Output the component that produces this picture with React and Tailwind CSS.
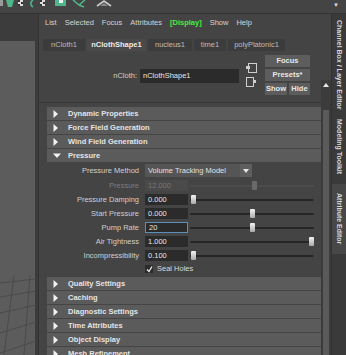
import React from 'react'

const FONT = { fontFamily: '"Liberation Sans", Arial, sans-serif' }

const Tri = ({ open }) =>
  open ? (
    <svg width="8" height="6" viewBox="0 0 8 6"><path d="M0 0.5h8L4 5z" fill="#f2f2f2" /></svg>
  ) : (
    <svg width="6" height="8" viewBox="0 0 6 8"><path d="M0.5 0v8L5 4z" fill="#f2f2f2" /></svg>
  )

const Header = ({ title, open }) => (
  <div className="flex h-[13px] shrink-0 items-center bg-[#5b5b5b] pl-[6px] text-[7.5px] font-bold text-[#e4e4e4]">
    <div className="flex w-[15px] items-center">
      <Tri open={open} />
    </div>
    <span>{title}</span>
  </div>
)

const Slider = ({ pos, disabled }) => (
  <div className="relative ml-[2px] h-full w-[124px]">
    <div className={`absolute left-0 right-0 top-[5px] h-[2px] rounded-full ${disabled ? 'bg-[#4c4c4c]' : 'bg-[#262626]'}`}></div>
    <div
      className={`absolute top-[1px] h-[9px] w-[5px] rounded-[1px] ${disabled ? 'bg-[#6a6a6a]' : 'bg-gradient-to-b from-[#f4f4f4] to-[#a9a9a9]'}`}
      style={{ left: pos }}
    ></div>
  </div>
)

const Row = ({ label, value, pos, disabled, active }) => (
  <div className="flex h-[11px] items-center">
    <div className={`w-[98px] pr-[6px] text-right ${disabled ? 'text-[#7c7c7c]' : 'text-[#cfcfcf]'}`}>{label}</div>
    <div
      className={`flex h-[11px] w-[43px] items-center pl-[3px] ${
        disabled
          ? 'bg-[#4a4a4a] text-[#777]'
          : active
            ? 'border border-[#5c8fb8] bg-[#2b2b2b] pl-[2px] text-[#e6e6e6]'
            : 'bg-[#2b2b2b] text-[#e6e6e6]'
      }`}
    >
      {value}
    </div>
    <Slider pos={pos} disabled={disabled} />
  </div>
)

const Btn = ({ children, className = '' }) => (
  <div className={`flex h-[12px] items-center justify-center bg-[#5d5d5d] text-[7.5px] font-bold text-[#e8e8e8] ${className}`}>
    {children}
  </div>
)

const Toolbar = () => (
  <div className="flex h-[14px] shrink-0 items-start border-b border-[#333] bg-[#444]">
    <svg width="120" height="8" viewBox="0 0 120 8">
      <rect x="0" y="0" width="3" height="6" fill="#9a9a9a" />
      <path d="M6 0h8l-2 7H8z" fill="#4fb58a" />
      <rect x="18" y="0" width="5" height="6" fill="#ddd" />
      <rect x="18" y="0" width="2" height="2" fill="#333" />
      <rect x="21" y="2" width="2" height="2" fill="#333" />
      <rect x="18" y="4" width="2" height="2" fill="#333" />
      <path d="M33 0c-3 2-3 5 0 7" stroke="#4fb58a" strokeWidth="1.6" fill="none" />
      <rect x="40" y="0" width="5" height="6" fill="#ddd" />
      <rect x="40" y="0" width="2" height="2" fill="#333" />
      <rect x="43" y="2" width="2" height="2" fill="#333" />
      <rect x="40" y="4" width="2" height="2" fill="#333" />
      <rect x="55" y="0" width="11" height="6" fill="#4fb58a" />
      <rect x="59" y="0" width="4" height="3" fill="#eee" />
      <path d="M73 0l6 5 6-5M79 5l5 2" stroke="#4fb58a" strokeWidth="1.6" fill="none" />
      <path d="M97 6l7-5 7 5" stroke="#ccc" strokeWidth="1.6" fill="none" />
      <path d="M100 6l4-3 4 3z" fill="#888" />
    </svg>
    <div className="ml-auto mr-[7px] mt-[2px] text-[6px] text-[#ddd]">▼</div>
  </div>
)

const Viewport = () => (
  <div className="flex w-[39px] shrink-0 flex-col border-r border-[#333] bg-[#3c3c3c]">
    <div className="h-[27px] shrink-0"></div>
    <div className="relative mr-[3px] flex-1 bg-[#5c5c5c]">
      <svg className="absolute bottom-0 left-0" width="36" height="80" viewBox="0 0 36 80">
        <g stroke="#4b4b4b" strokeWidth="1" fill="none">
          <path d="M0 8L36 4" />
          <path d="M0 22L36 16" />
          <path d="M0 38L36 30" />
          <path d="M0 58L36 47" />
          <path d="M0 78L36 66" />
          <path d="M14 0L4 80" />
          <path d="M30 0L24 80" />
        </g>
      </svg>
    </div>
  </div>
)

const VTab = ({ children, className = '' }) => (
  <div
    className={`flex shrink-0 items-center justify-center whitespace-nowrap text-[7px] font-bold text-[#d8d8d8] ${className}`}
    style={{ writingMode: 'vertical-rl' }}
  >
    {children}
  </div>
)

export default function App() {
  const menu = ['List', 'Selected', 'Focus', 'Attributes']
  const tabs = [
    { t: 'nCloth1', w: 'w-[42px]' },
    { t: 'nClothShape1', w: 'w-[59px]', a: true },
    { t: 'nucleus1', w: 'w-[44px]' },
    { t: 'time1', w: 'w-[32px]' },
    { t: 'polyPlatonic1', w: 'w-[57px]' },
  ]
  return (
    <div className="flex h-[355px] w-[346px] flex-col overflow-hidden bg-[#444] text-[7.5px] leading-none" style={FONT}>
      <Toolbar />
      <div className="flex min-h-0 flex-1">
        <Viewport />
        <div className="flex min-w-0 flex-1 flex-col">
          <div className="flex min-h-0 flex-1">
            <div className="flex w-[282px] shrink-0 flex-col">
              {/* menu */}
              <div className="flex h-[17px] shrink-0 items-center gap-[8px] pl-[6px] text-[7.5px] text-[#d4d4d4]">
                {menu.map(m => (
                  <span key={m}>{m}</span>
                ))}
                <span className="font-bold text-[#3ef03e]">[Display]</span>
                <span>Show</span>
                <span>Help</span>
              </div>
              {/* tabs */}
              <div className="mt-[8px] flex h-[12px] shrink-0 gap-[2px] pl-[4px]">
                {tabs.map(tb => (
                  <div
                    key={tb.t}
                    className={`flex items-center justify-center ${tb.w} ${
                      tb.a ? 'bg-[#4a4a4a] font-bold text-[#ececec]' : 'bg-[#3c3c3c] text-[#bdbdbd]'
                    }`}
                  >
                    {tb.t}
                  </div>
                ))}
              </div>
              {/* nCloth row */}
              <div className="flex h-[52px] shrink-0 items-start border-b border-[#363636]">
                <div className="mt-[18px] flex items-center">
                  <span className="w-[101px] pr-[3px] text-right text-[#d0d0d0]">nCloth:</span>
                  <div className="flex h-[14px] w-[99px] items-center bg-[#2b2b2b] pl-[3px] text-[#e6e6e6]">nClothShape1</div>
                </div>
                <div className="ml-[7px] mt-[12px] flex flex-col gap-[4px]">
                  <svg width="11" height="10" viewBox="0 0 11 10">
                    <rect x="2.5" y="0.5" width="8" height="9" fill="none" stroke="#cfcfcf" />
                    <rect x="0" y="3" width="4" height="3" fill="#cfcfcf" />
                  </svg>
                  <svg width="11" height="10" viewBox="0 0 11 10">
                    <rect x="0.5" y="0.5" width="7" height="9" fill="none" stroke="#cfcfcf" />
                    <path d="M7 3h3v3H7z" fill="#cfcfcf" />
                  </svg>
                </div>
                <div className="ml-[8px] mt-[4px] flex w-[45px] flex-col gap-[2px]">
                  <Btn>Focus</Btn>
                  <Btn>Presets*</Btn>
                  <div className="flex gap-[2px]">
                    <Btn className="w-[22px]">Show</Btn>
                    <Btn className="flex-1">Hide</Btn>
                  </div>
                </div>
              </div>
              {/* attribute list */}
              <div className="flex min-h-0 flex-1 flex-col gap-[1px] overflow-hidden pl-[8px] pt-[4px]">
                <Header title="Dynamic Properties" />
                <Header title="Force Field Generation" />
                <Header title="Wind Field Generation" />
                <Header title="Pressure" open />
                <div className="flex shrink-0 flex-col gap-[3px] pb-[2px] pt-[1px]">
                  <div className="flex h-[13px] items-center">
                    <div className="w-[98px] pr-[6px] text-right text-[#cfcfcf]">Pressure Method</div>
                    <div className="flex h-[13px] w-[107px] items-center bg-[#555] pl-[3px] text-[#e0e0e0]">
                      <span className="flex-1">Volume Tracking Model</span>
                      <div className="flex h-full w-[12px] items-center justify-center bg-[#5e5e5e]">
                        <svg width="6" height="4" viewBox="0 0 6 4"><path d="M0 0h6L3 4z" fill="#e8e8e8" /></svg>
                      </div>
                    </div>
                  </div>
                  <Row label="Pressure" value="12.000" pos={62} disabled />
                  <Row label="Pressure Damping" value="0.000" pos={1} />
                  <Row label="Start Pressure" value="0.000" pos={60} />
                  <Row label="Pump Rate" value="20" pos={60} active />
                  <Row label="Air Tightness" value="1.000" pos={119} />
                  <Row label="Incompressibility" value="0.100" pos={1} />
                  <div className="flex h-[10px] items-center pl-[98px] text-[#d8d8d8]">
                    <div className="mr-[4px] flex h-[8px] w-[8px] items-center justify-center bg-[#2b2b2b]">
                      <svg width="7" height="7" viewBox="0 0 7 7"><path d="M1 3.5l2 2 3-5" stroke="#f0f0f0" strokeWidth="1.3" fill="none" /></svg>
                    </div>
                    Seal Holes
                  </div>
                </div>
                <Header title="Quality Settings" />
                <Header title="Caching" />
                <Header title="Diagnostic Settings" />
                <Header title="Time Attributes" />
                <Header title="Object Display" />
                <Header title="Mesh Refinement" />
              </div>
            </div>
            {/* scrollbar */}
            <div className="flex w-[10px] shrink-0 flex-col pt-[66px]">
              <div className="flex flex-1 flex-col border-l border-r border-[#3a3a3a] bg-[#3c3c3c]">
                <div className="flex h-[10px] items-center justify-center">
                  <svg width="6" height="4" viewBox="0 0 6 4"><path d="M0 4h6L3 0z" fill="#e8e8e8" /></svg>
                </div>
                <div className="mx-[1px] mt-[20px] flex-1 bg-[#5a5a5a]"></div>
              </div>
            </div>
          </div>
        </div>
        {/* right vertical tabs */}
        <div className="flex w-[15px] shrink-0 flex-col overflow-hidden border-l border-[#333] bg-[#3a3a3a] pt-[6px]">
          <VTab className="h-[90px]">Channel Box / Layer Editor</VTab>
          <VTab className="mt-[3px] h-[68px]">Modeling Toolkit</VTab>
          <VTab className="mt-[3px] h-[70px] bg-[#474747]">Attribute Editor</VTab>
        </div>
      </div>
    </div>
  )
}
